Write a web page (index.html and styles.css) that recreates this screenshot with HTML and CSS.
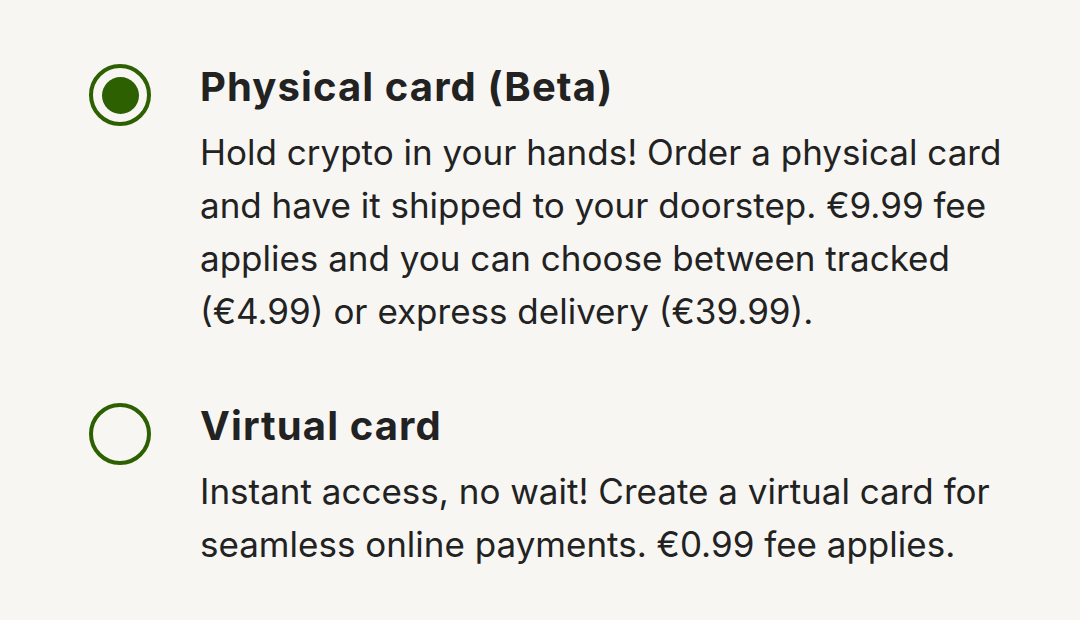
FILE: index.html
```html
<!DOCTYPE html>
<html lang="en">
<head>
    <meta charset="UTF-8">
    <meta name="viewport" content="width=device-width, initial-scale=1.0">
    <title>Card type</title>
    <link rel="stylesheet" href="styles.css">
</head>
<body>
    <div class="card_options">
        <!-- physical card -->
        <label class="option">
            <span class="radio checked"></span>
            <span class="option_text">
                <span class="option_title">Physical card (Beta)</span>
                <span class="option_desc">Hold crypto in your hands! Order a physical card and have it shipped to your doorstep. €9.99 fee applies and you can choose between tracked (€4.99) or express delivery (€39.99).</span>
            </span>
        </label>
        <!-- virtual card -->
        <label class="option">
            <span class="radio"></span>
            <span class="option_text">
                <span class="option_title">Virtual card</span>
                <span class="option_desc">Instant access, no wait! Create a virtual card for seamless online payments. €0.99 fee applies.</span>
            </span>
        </label>
    </div>
</body>
</html>
```

FILE: styles.css
```css
body{
    margin: 0;
    background-color: #f7f6f3;
    color: #222222;
    font-family: Inter, "Open Sans", sans-serif;
}
.card_options{
    display: flex; flex-direction: column; gap: 62px;
    padding: 61px 0 0 89px;
}
.option{
    display: flex; gap: 49px; cursor: pointer;
}
/* radio button */
.radio{
    flex: none;
    width: 62px; height: 62px; box-sizing: border-box;
    border: 4px solid #2c6000; border-radius: 50%;
    margin-top: 3px;
    display: flex; align-items: center; justify-content: center;
}
.radio.checked::after{
    content: ""; width: 37px; height: 37px;
    border-radius: 50%; background-color: #2c6000;
}
.option_text{
    display: flex; flex-direction: column; gap: 13px;
    width: 840px;
}
.option_title{
    font-size: 40px; font-weight: bold; line-height: 52px;
    letter-spacing: 1.1px;
}
.option_desc{
    font-size: 35px; line-height: 53px;
}
```
